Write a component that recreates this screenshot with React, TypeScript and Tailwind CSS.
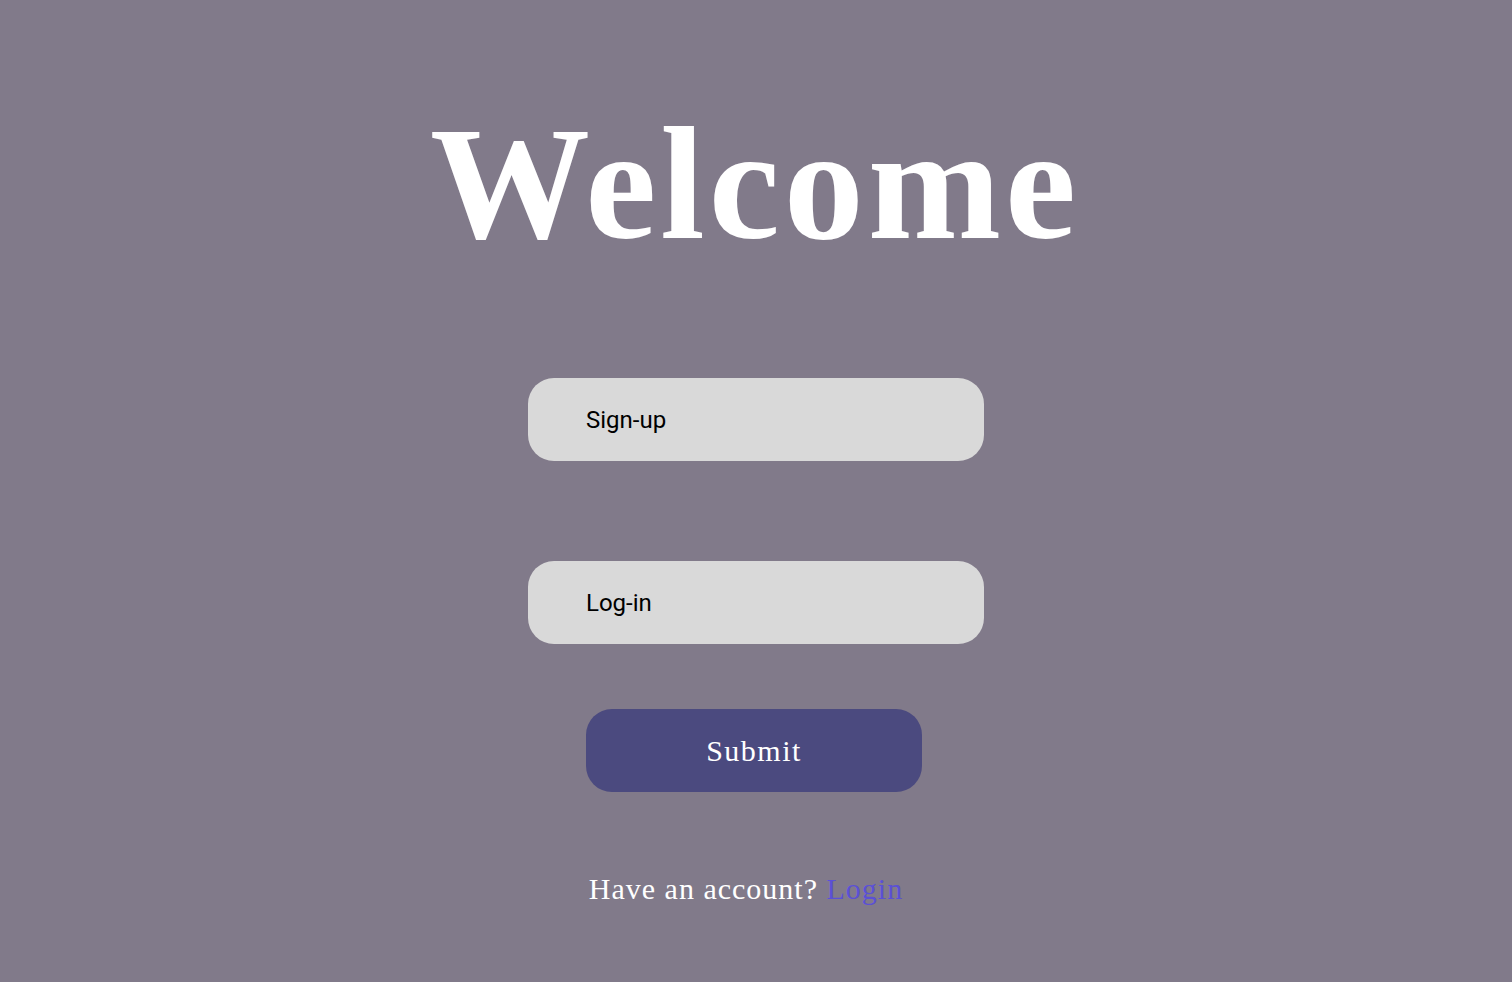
const serif = { fontFamily: '"Liberation Serif", "DejaVu Serif", serif' };

const Field = ({ label }: { label: string }) => {
    return (
        <input
            type="text"
            placeholder={label}
            className="w-[456px] h-[83px] rounded-[26px] bg-[#d9d9d9] pl-[58px] text-[24px] text-black placeholder:text-black outline-none font-['Roboto',sans-serif]"
        />
    );
};

const App = () => {
    return (
        <div className="min-h-screen w-full bg-[#817a8a] flex flex-col items-center">
            {/* Heading */}
            <h1
                className="mt-[104px] ml-[-2px] text-[160px] leading-none text-white font-bold tracking-[4px] font-['Liberation_Serif',serif]"
            >
                Welcome
            </h1>

            {/* Form */}
            <form className="mt-[114px] flex flex-col items-center">
                <Field label="Sign-up" />
                <div className="mt-[100px]">
                    <Field label="Log-in" />
                </div>
                <button
                    type="button"
                    className="mt-[65px] mr-[4px] w-[336px] h-[83px] rounded-[26px] bg-[#4b4a7f] text-white text-[30px] tracking-[1.5px] font-['Liberation_Serif',serif]"
                >
                    Submit
                </button>
            </form>

            {/* Footer */}
            <p className="mt-[82px] mr-[20px] text-[30px] leading-none tracking-[1px] text-white" style={serif}>
                Have an account? <a href="#" className="text-[#5b50d6]">Login</a>
            </p>
        </div>
    );
};

export default App;
